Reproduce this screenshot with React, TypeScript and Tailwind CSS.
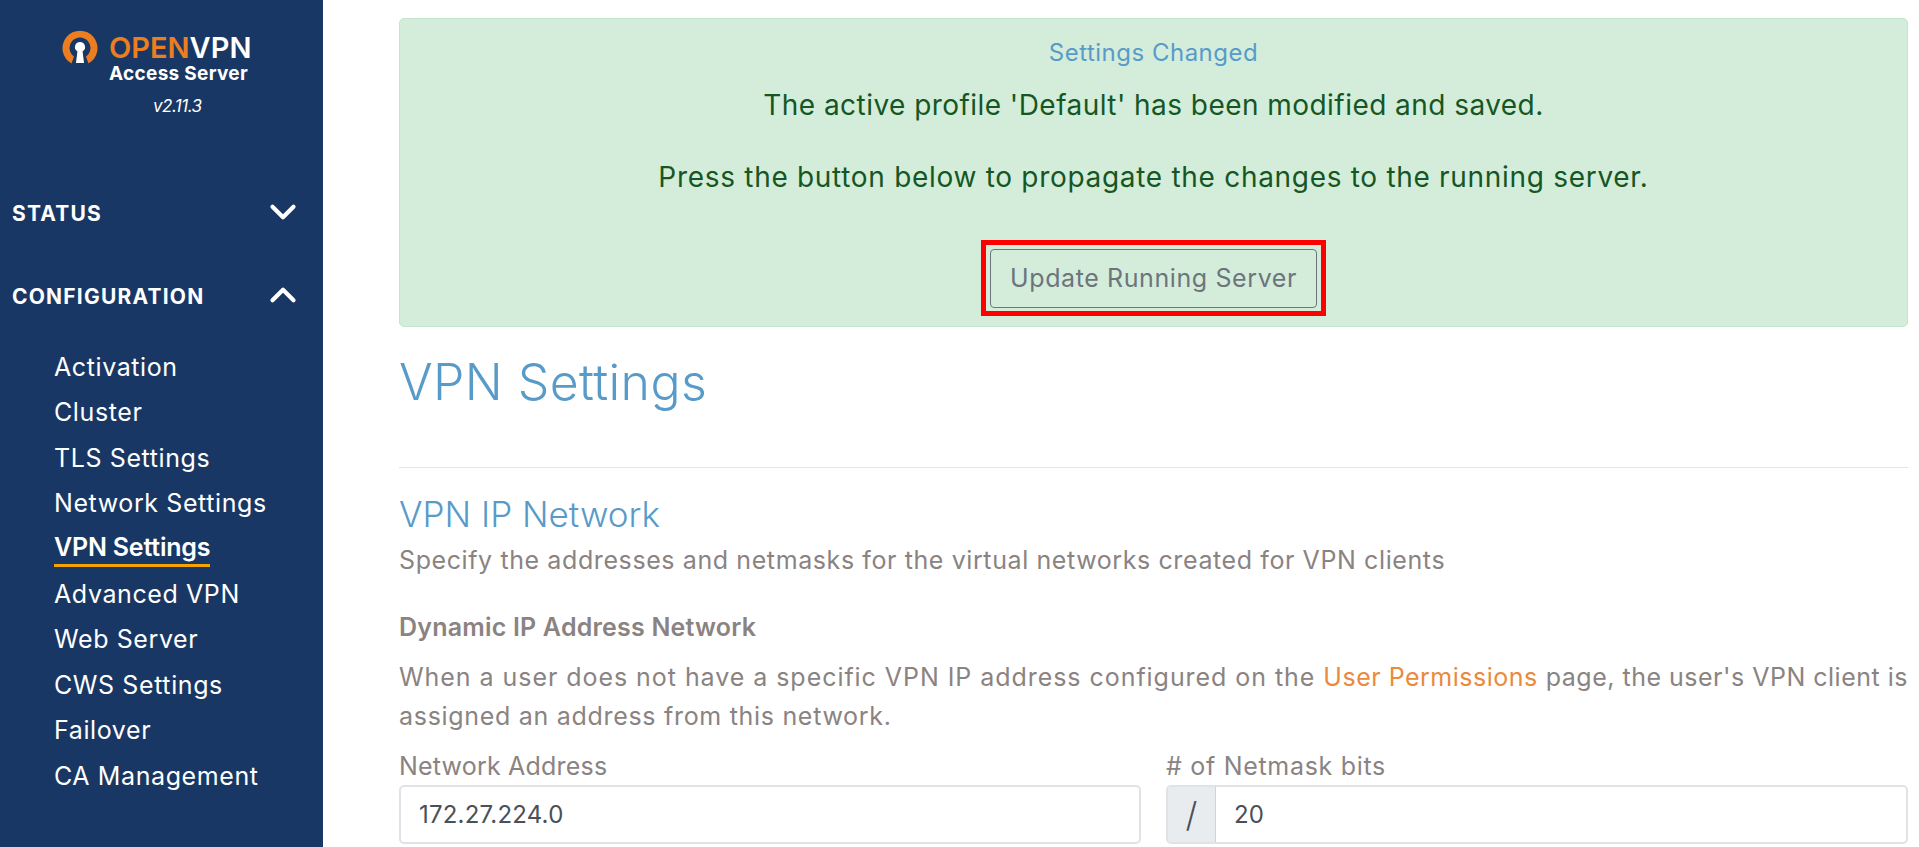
import { ChevronDown, ChevronUp } from "lucide-react";

const configLinks = [
  "Activation",
  "Cluster",
  "TLS Settings",
  "Network Settings",
  "VPN Settings",
  "Advanced VPN",
  "Web Server",
  "CWS Settings",
  "Failover",
  "CA Management",
];

const Logo = () => (
  <div className="flex flex-col pl-[62px]">
    <div className="flex items-start gap-[11px]">
      <svg width="36" height="35" viewBox="0 0 36 35">
        <path
          d="M9.5 33.5 A17.5 17.5 0 1 1 26.5 33.5 L24 26.5 A10.5 10.5 0 1 0 12 26.5 Z"
          fill="#ea7e20"
        />
        <path
          d="M18 12 a5 5 0 0 1 2.6 9.3 L22 33 H14 L15.4 21.3 A5 5 0 0 1 18 12 Z"
          fill="#ffffff"
        />
      </svg>
      <div className="flex w-[142px] flex-col">
        <div className="mt-[2px] whitespace-nowrap text-[29px] font-semibold leading-[32px]">
          <span className="text-[#ea7e20]">OPEN</span>
          <span className="text-white">VPN</span>
        </div>
        <div className="whitespace-nowrap text-[19px] font-bold leading-[20px] tracking-[0.3px] text-white">
          Access Server
        </div>
      </div>
    </div>
    <div className="ml-[91px] mt-[10px] text-[17px] italic leading-[24px] tracking-[-0.5px] text-white">v2.11.3</div>
  </div>
);

const SectionHeader = ({ label, open }: { label: string; open?: boolean }) => (
  <div className="flex h-[28px] items-center justify-between pl-[12px] pr-[19px]">
    <span className="text-[21px] font-bold leading-[28px] tracking-[1.2px] text-white">{label}</span>
    {open ? (
      <ChevronUp className="mb-[4px] h-[42px] w-[42px] text-white" strokeWidth={2.4} />
    ) : (
      <ChevronDown className="mb-[4px] h-[42px] w-[42px] text-white" strokeWidth={2.4} />
    )}
  </div>
);

const Sidebar = () => (
  <aside className="flex w-[323px] shrink-0 flex-col bg-[#193764] pt-[30px]">
    <Logo />
    <div className="mt-[82px]">
      <SectionHeader label="STATUS" />
    </div>
    <div className="mt-[55px]">
      <SectionHeader label="CONFIGURATION" open />
    </div>
    <nav className="mt-[38px] flex flex-col gap-[9.4px] pl-[54px]">
      {configLinks.map((link) =>
        link === "VPN Settings" ? (
          <div key={link} className="h-[36px] leading-[36px]">
            <a className="inline-block border-b-[3px] border-[#f5a300] text-[25px] font-semibold leading-[33px] tracking-[-0.2px] text-white">
              {link}
            </a>
          </div>
        ) : (
          <a key={link} className="h-[36px] text-[25px] leading-[36px] tracking-[0.6px] text-white">
            {link}
          </a>
        ),
      )}
    </nav>
  </aside>
);

const Alert = () => (
  <section className="flex h-[309px] flex-col items-center rounded-[5px] border border-[#c3e6cb] bg-[#d4edda] pt-[16px]">
    <h4 className="text-[24px] leading-[36px] tracking-[0.5px] text-[#589bc9]">Settings Changed</h4>
    <p className="mt-[16px] text-[28px] leading-[36px] tracking-[0.45px] text-[#155724]">
      The active profile 'Default' has been modified and saved.
    </p>
    <p className="mt-[36px] text-[28px] leading-[36px] tracking-[0.7px] text-[#155724]">
      Press the button below to propagate the changes to the running server.
    </p>
    <div className="mt-[45px] border-[5px] border-[#ff0000] px-[4px] pb-[3px] pt-[4px]">
      <button className="h-[59px] w-[327px] rounded-[4px] border border-[#6c757d] text-[25px] tracking-[0.6px] text-[#6c757d]">
        Update Running Server
      </button>
    </div>
  </section>
);

const NetworkForm = () => (
  <section>
    <h3 className="text-[35px] font-light leading-[44px] text-[#589bc9]">VPN IP Network</h3>
    <p className="mt-[6px] text-[25px] leading-[36px] tracking-[0.6px] text-[#8a8382]">
      Specify the addresses and netmasks for the virtual networks created for VPN clients
    </p>
    <h5 className="mt-[31px] text-[25px] font-semibold leading-[36px] tracking-[0.2px] text-[#8a8382]">
      Dynamic IP Address Network
    </h5>
    <p className="mt-[13px] text-[25px] leading-[39px] tracking-[0.95px] text-[#8a8382]">
      When a user does not have a specific VPN IP address configured on the{" "}
      <a className="tracking-[0.5px] text-[#ea8a3c]">User Permissions</a>{" "}
      <span className="tracking-[0.5px]">page, the user's VPN client is</span>{" "}
      <span className="tracking-[0.7px]">assigned an address from this network.</span>
    </p>
    <div className="mt-[12px] grid grid-cols-2 gap-[25px]">
      <label className="block">
        <span className="block text-[25px] leading-[36px] tracking-[0.2px] text-[#8a8382]">Network Address</span>
        <div className="mt-[1px] flex h-[59px] items-center rounded-[5px] border-2 border-[#dfe3e8] px-[18px] text-[24px] tracking-[0.2px] text-[#495057]">
          172.27.224.0
        </div>
      </label>
      <label className="block">
        <span className="block text-[25px] leading-[36px] tracking-[0.7px] text-[#8a8382]"># of Netmask bits</span>
        <div className="mt-[1px] flex h-[59px] items-center overflow-hidden rounded-[5px] border-2 border-[#dfe3e8] text-[24px] text-[#495057]">
          <span className="flex h-full w-[48px] items-center justify-center border-r border-[#ced4da] bg-[#e9ecef] text-[34px] font-light">
            /
          </span>
          <span className="px-[18px]">20</span>
        </div>
      </label>
    </div>
  </section>
);

export default function App() {
  return (
    <div className="flex h-screen overflow-hidden bg-white font-['Inter',sans-serif]">
      <Sidebar />
      <main className="flex-1 pl-[76px] pr-[11px] pt-[18px]">
        <Alert />
        <h1 className="mt-[21px] text-[50px] font-light leading-[68px] tracking-[0.4px] text-[#589bc9]">VPN Settings</h1>
        <hr className="mt-[51px] border-[#e5e5e5]" />
        <div className="mt-[24px]">
          <NetworkForm />
        </div>
      </main>
    </div>
  );
}
